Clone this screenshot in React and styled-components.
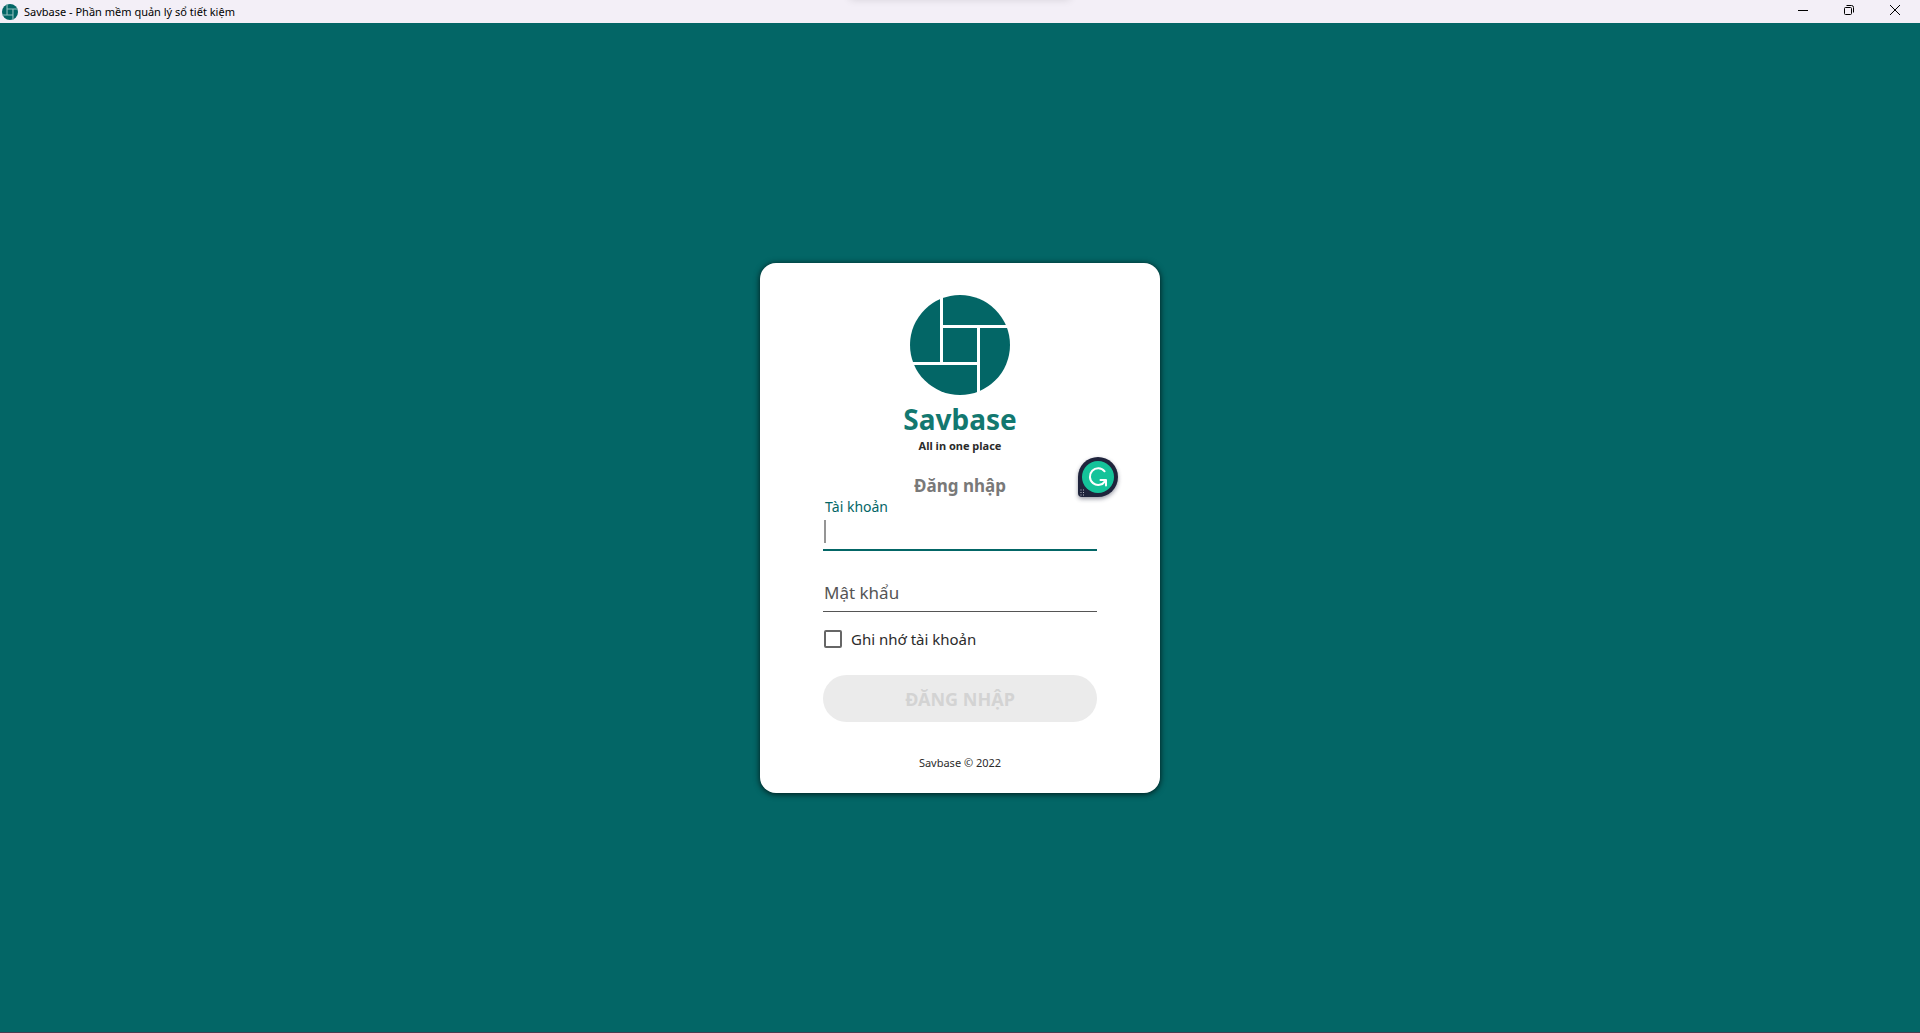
import React, { useState } from 'react';
import styled, { createGlobalStyle } from 'styled-components';

const teal = '#036666';
const chrome = '#f3eff7';

const GlobalStyle = createGlobalStyle`
  *, *::before, *::after { box-sizing: border-box; }
  body {
    margin: 0;
    font-family: "Noto Sans", "Open Sans", sans-serif;
    color: #2b2b2b;
  }
  button, input { font: inherit; color: inherit; }
`;

const Window = styled.div`
  min-height: 100vh;
  display: flex;
  flex-direction: column;
  background: ${teal};
  box-shadow: inset 0 -1px #4b3c50;
`;

const TitleBar = styled.header`
  position: relative;
  display: flex;
  align-items: center;
  gap: 6px;
  height: 23px;
  padding: 0 2px;
  background: ${chrome};
  color: #000;
  overflow: hidden;
`;

const TopShade = styled.div`
  position: absolute;
  top: -10px;
  left: 50%;
  width: 220px;
  height: 8px;
  transform: translateX(-50%);
  box-shadow: 0 1px 8px rgba(0, 0, 0, 0.15);
`;

const WindowTitle = styled.span`
  flex: 1;
  font-size: 11px;
  line-height: 22px;
`;

const WindowButtons = styled.div`
  display: flex;
  height: 100%;
`;

const WindowButton = styled.button`
  display: flex;
  align-items: center;
  justify-content: center;
  width: 46px;
  height: 100%;
  padding: 0 0 3px;
  border: 0;
  background: transparent;
`;

const Main = styled.main`
  flex: 1;
  display: flex;
  align-items: center;
  justify-content: center;
`;

const Card = styled.form`
  position: relative;
  display: flex;
  flex-direction: column;
  align-items: center;
  width: 400px;
  padding: 32px 63px 22px;
  border-radius: 16px;
  background: #fff;
  box-shadow: 0 1px 6px rgba(0, 0, 0, 0.8);
`;

const Brand = styled.h1`
  margin: 8px 0 3px;
  color: #127870;
  font-size: 28px;
  line-height: 32px;
  font-weight: 700;
`;

const Tagline = styled.p`
  margin: 0 0 21px;
  font-size: 11px;
  line-height: 16px;
  font-weight: 700;
`;

const Heading = styled.h2`
  margin: 0;
  color: #797979;
  font-size: 17px;
  line-height: 22px;
  font-weight: 700;
`;

const Field = styled.div`
  width: 100%;
  margin-bottom: ${(p) => p.$gap}px;
`;

const FieldLabel = styled.label`
  display: block;
  padding-left: 2px;
  color: ${teal};
  font-size: 14px;
  line-height: 20px;
`;

const ActiveLine = styled.div`
  display: flex;
  height: 34px;
  padding: 3px 0 6px 1px;
  border-bottom: 2px solid ${teal};
`;

const Caret = styled.span`
  width: 2px;
  background: #959595;
`;

const TextInput = styled.input`
  flex: 1;
  min-width: 0;
  width: 100%;
  padding: 0;
  border: 0;
  outline: 0;
  background: transparent;
  caret-color: transparent;
  font-size: 17px;
`;

const IdleLine = styled.div`
  display: grid;
  height: 31px;
  padding-bottom: 6px;
  border-bottom: 1px solid #555;

  > * { grid-area: 1 / 1; }
`;

const InnerLabel = styled.label`
  padding-left: 1px;
  color: #555;
  font-size: 17px;
  line-height: 24px;
`;

const Remember = styled.label`
  display: flex;
  align-items: center;
  gap: 9px;
  width: 100%;
  margin-bottom: 24px;
  padding-left: 1px;
  font-size: 15px;
  line-height: 24px;
`;

const Checkbox = styled.input`
  appearance: none;
  width: 18px;
  height: 18px;
  margin: 0;
  border: 2px solid #666;
  border-radius: 2px;

  &:checked { background: ${teal}; border-color: ${teal}; }
`;

const Submit = styled.button`
  width: 100%;
  height: 47px;
  margin-bottom: 33px;
  padding: 0;
  border: 0;
  border-radius: 24px;
  background: #ebebeb;
  color: #d3d3d3;
  font-size: 18px;
  line-height: 24px;
  font-weight: 700;
`;

const Footer = styled.small`
  font-size: 11px;
  line-height: 16px;
`;

const Assistant = styled.button`
  position: absolute;
  top: 194px;
  right: 42px;
  width: 40px;
  height: 40px;
  padding: 0;
  border: 0;
  border-radius: 20px 20px 20px 4px;
  background: #1f243c;
  box-shadow: 0 2px 4px rgba(31, 36, 60, 0.45);

  svg { display: block; }
`;

function Logo({ size, line }) {
  return (
    <svg width={size} height={size} viewBox="0 0 100 100" aria-hidden="true">
      <circle cx="50" cy="50" r="50" fill={teal} />
      <path
        d="M31.500 0V68.500 M31.500 31.500H100 M68.500 31.500V100 M0 68.500H68.500"
        fill="none"
        stroke={line}
        strokeWidth={size < 40 ? 7 : 3}
      />
    </svg>
  );
}

function AssistantIcon() {
  return (
    <svg width="40" height="40" viewBox="0 0 40 40" aria-hidden="true">
      <circle cx="20" cy="20" r="16" fill="#15c39a" />
      <path
        d="M26.600 14.300A8.300 8.300 0 1 0 27.200 24.100"
        fill="none" stroke="#fff" strokeWidth="2" strokeLinecap="round"
      />
      <path d="M22.500 23H28V28.500" fill="none" stroke="#fff" strokeWidth="2" strokeLinecap="round" strokeLinejoin="round" />
      <path d="M2.500 33h1M5 33h1M2.500 35.500h1M5 35.500h1M2.500 38h1M5 38h1" stroke="#b9bbc6" strokeWidth="1" />
    </svg>
  );
}

export default function App() {
  const [account, setAccount] = useState('');
  const [password, setPassword] = useState('');

  return (
    <Window>
      <GlobalStyle />
      <TitleBar>
        <TopShade />
        <Logo size={16} line="#8fbcbc" />
        <WindowTitle>Savbase - Phần mềm quản lý sổ tiết kiệm</WindowTitle>
        <WindowButtons>
          <WindowButton type="button" aria-label="Minimize">
            <svg width="10" height="10"><path d="M0 5.500H10" stroke="#000" /></svg>
          </WindowButton>
          <WindowButton type="button" aria-label="Restore">
            <svg width="10" height="10" fill="none" stroke="#000">
              <rect x="0.500" y="2.500" width="7" height="7" rx="1" />
              <path d="M2.500 0.500H7.500A2 2 0 0 1 9.500 2.500V7.500" />
            </svg>
          </WindowButton>
          <WindowButton type="button" aria-label="Close">
            <svg width="10" height="10"><path d="M0 0L10 10M10 0L0 10" stroke="#000" /></svg>
          </WindowButton>
        </WindowButtons>
      </TitleBar>
      <Main>
        <Card onSubmit={(e) => e.preventDefault()}>
          <Logo size={100} line="#fff" />
          <Brand>Savbase</Brand>
          <Tagline>All in one place</Tagline>
          <Heading>Đăng nhập</Heading>
          <Field $gap={30}>
            <FieldLabel htmlFor="account">Tài khoản</FieldLabel>
            <ActiveLine>
              {!account && <Caret />}
              <TextInput id="account" value={account} onChange={(e) => setAccount(e.target.value)} />
            </ActiveLine>
          </Field>
          <Field $gap={15}>
            <IdleLine>
              {!password && <InnerLabel htmlFor="password">Mật khẩu</InnerLabel>}
              <TextInput
                id="password"
                type="password"
                aria-label="Mật khẩu"
                value={password}
                onChange={(e) => setPassword(e.target.value)}
              />
            </IdleLine>
          </Field>
          <Remember>
            <Checkbox type="checkbox" />
            Ghi nhớ tài khoản
          </Remember>
          <Submit type="submit" disabled={!account || !password}>ĐĂNG NHẬP</Submit>
          <Footer>Savbase © 2022</Footer>
          <Assistant type="button" aria-label="Grammarly">
            <AssistantIcon />
          </Assistant>
        </Card>
      </Main>
    </Window>
  );
}
